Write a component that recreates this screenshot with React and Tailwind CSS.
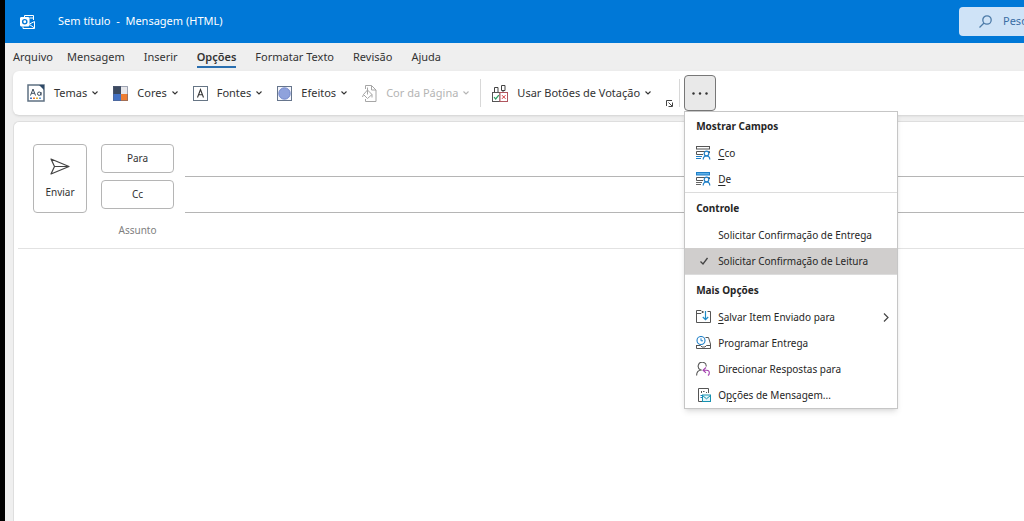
import React, { useState } from 'react';
import clsx from 'clsx';

const TABS = ['Arquivo', 'Mensagem', 'Inserir', 'Opções', 'Formatar Texto', 'Revisão', 'Ajuda'];

const OutlookIcon = () => (
  <svg className="w-4 h-4 shrink-0" viewBox="0 0 16 16" fill="none" stroke="#fff">
    <path d="M4.500 3V1.500h9V6M3 12.500v2h11.500V7.500" />
    <path d="M9.500 4h4M9.500 10l5-2.500M9.500 10.500l5 3.500" />
    <rect x="0.500" y="3.500" width="8.500" height="8.500" rx="0.500" fill="#fff" />
    <circle cx="4.750" cy="7.750" r="2.100" stroke="#0078d7" strokeWidth="1.400" />
  </svg>
);

const ThemesIcon = () => (
  <svg className="w-[18px] h-[18px] shrink-0" viewBox="0 0 18 18" fill="none">
    <rect x="1" y="1" width="16" height="16" fill="#fff" stroke="#5f7183" strokeWidth="1.500" />
    <path d="M12 1h5v5z" fill="#2f4a68" />
    <path d="M3.500 11.500L6 5l2.500 6.500M4.400 9.300h3.200" stroke="#3a4a5c" />
    <path d="M14 8v3.500" stroke="#3a4a5c" />
    <circle cx="12.200" cy="9.700" r="1.700" stroke="#3a4a5c" />
    <path d="M3 14.300h2" stroke="#4472c4" strokeWidth="1.500" />
    <path d="M6 14.300h2" stroke="#ed7d31" strokeWidth="1.500" />
    <path d="M9 14.300h2" stroke="#e0b030" strokeWidth="1.500" />
    <path d="M12 14.300h2" stroke="#5f9bd5" strokeWidth="1.500" />
  </svg>
);

const ColorsIcon = () => (
  <svg className="w-[15px] h-[15px] shrink-0" viewBox="0 0 15 15">
    <path d="M0 0h8v8H0z" fill="#3c4a60" />
    <path d="M8 0h7v8H8z" fill="#e6e6ea" />
    <path d="M0 8h8v7H0z" fill="#4472c4" />
    <path d="M8 8h7v7H8z" fill="#ed7d31" />
    <path d="M0.500 0.500h14v14H0.500z" fill="none" stroke="#55607a" strokeOpacity="0.500" />
  </svg>
);

const FontsIcon = () => (
  <svg className="w-[15px] h-[15px] shrink-0" viewBox="0 0 15 15" fill="none">
    <rect x="0.500" y="0.500" width="14" height="14" stroke="#667585" />
    <path d="M4.500 11.500l3-8 3 8M5.500 8.800h4" stroke="#333" strokeWidth="1.100" />
  </svg>
);

const EffectsIcon = () => (
  <svg className="w-[15px] h-[15px] shrink-0" viewBox="0 0 15 15">
    <rect x="0.500" y="0.500" width="14" height="14" fill="#f4f5fb" stroke="#66758c" />
    <circle cx="7.500" cy="7.500" r="5.700" fill="#8fa2dc" stroke="#7288cc" />
  </svg>
);

const PageColorIcon = () => (
  <svg className="w-[15px] h-[17px] shrink-0" viewBox="0 0 15 17" fill="none" stroke="#a6a6a6">
    <path d="M3.500 4V0.500h6l4.500 4.500v11.500H3.500V14M9.500 0.500V5H14" />
    <path d="M5.500 5L10 9.500 5.500 13.500 1.500 9.500zM5.500 5V2.500M5.500 5v4.500M1.500 9.500L0.500 12" />
    <path d="M10 9.500v3" />
  </svg>
);

const VoteIcon = () => (
  <svg className="w-[16px] h-[17px] shrink-0" viewBox="0 0 16 17" fill="none">
    <path d="M2.500 8.500V2.500h3.500v6M9.500 5.500V0.500h3.500v5H9.500M11 5.500v3" stroke="#444" />
    <rect x="0.500" y="7.500" width="7.500" height="9" stroke="#555" fill="#fff" />
    <rect x="8" y="7.500" width="7.500" height="9" stroke="#b0565e" fill="#fff" />
    <path d="M2 12.200l1.700 1.800L6.800 10.200" stroke="#2f9e63" strokeWidth="1.200" />
    <path d="M10 10.200l3.500 3.600M13.500 10.200L10 13.800" stroke="#d13438" />
  </svg>
);

const SendIcon = () => (
  <svg className="w-5 h-[17px]" viewBox="0 0 20 17" fill="none" stroke="#444" strokeLinejoin="round">
    <path d="M1 1l18 7.500L1 16l3.500-7.500zM4.500 8.500H19" strokeWidth="1.200" />
  </svg>
);

const FieldIcon = ({ from }) => (
  <svg className="w-[15px] h-[14px]" viewBox="0 0 15 14" fill="none">
    <rect x="0.500" y="0.500" width="13" height="2.500" stroke={from ? '#1e7fc7' : '#555'} fill={from ? '#5fb0e8' : '#fff'} />
    <path d="M7 8.500H0.500v-3h13V7" stroke="#555" />
    <path d="M0 10.500h6M0 12.500h5" stroke={from ? '#666' : '#1e7fc7'} />
    <circle cx="10.500" cy="7.500" r="2.300" stroke="#1e7fc7" strokeWidth="1.200" fill="#fff" />
    <path d="M7.200 13.500c0-2.300 1.300-3.500 3.300-3.500s3.300 1.200 3.300 3.500" stroke="#1e7fc7" strokeWidth="1.200" />
  </svg>
);

const SaveIcon = () => (
  <svg className="w-[15px] h-[14px]" viewBox="0 0 15 14" fill="none">
    <path d="M7.500 1.500H6L5 0.500H0.500v12h14v-11h-3M0.500 3.500H5l1-1h1.500" stroke="#555" />
    <path d="M9.500 1v8.500M6.800 7l2.700 2.700L12.200 7" stroke="#1e8bc7" strokeWidth="1.200" />
  </svg>
);

const ScheduleIcon = () => (
  <svg className="w-[15px] h-[14px]" viewBox="0 0 15 14" fill="none">
    <path d="M9.500 1.500h3l2 6.500v4.500h-14V9M0.500 9.500h4l1.500 1.500h3l1.500-1.500h4" stroke="#555" />
    <circle cx="5" cy="4.500" r="4" stroke="#1e7fc7" strokeWidth="1.100" fill="#fff" />
    <path d="M5 2.300v2.500h2" stroke="#1e7fc7" />
  </svg>
);

const DirectIcon = () => (
  <svg className="w-[15px] h-[14px]" viewBox="0 0 15 14" fill="none">
    <path d="M4.500 7.800A4 4 0 1 1 10.200 4.500M0.600 13.500c0-3 1.800-5.500 5.200-5.500" stroke="#555" strokeWidth="1.100" />
    <path d="M10 5.500L7 8.200l3 2.700M7.200 8.200h3.300c2.200 0 3.500 1.500 2.500 4.300l-1 1" stroke="#a33fae" strokeWidth="1.100" />
  </svg>
);

const MessageOptionsIcon = () => (
  <svg className="w-[13px] h-[14px] ml-0.5" viewBox="0 0 13 14" fill="none">
    <path d="M4 13.500H0.500v-13h10V5" stroke="#555" />
    <path d="M3.500 3v2M5 3.500h1.500M8 4.500h1" stroke="#555" />
    <path d="M2.500 7.500h1.500M2.500 9.500h1.500" stroke="#1e7fc7" />
    <rect x="4.500" y="7" width="8" height="6.500" fill="#e6f6fa" stroke="#1691b0" />
    <path d="M4.500 7.500l4 3.300 4-3.300" stroke="#1691b0" />
  </svg>
);

const Chevron = ({ className }) => (
  <svg className={clsx('w-1.5 h-1 shrink-0', className)} viewBox="0 0 6 4" fill="none" stroke="currentColor">
    <path d="M0.500 0.500L3 3 5.500 0.500" strokeWidth="1.100" />
  </svg>
);

const RibbonButton = ({ icon, label, disabled }) => (
  <button type="button" disabled={disabled} className={clsx('flex items-center whitespace-nowrap', disabled ? 'text-[#b4b4b4]' : 'text-[#333]')}>
    {icon}
    <span className="ml-[9px]">{label}</span>
    <Chevron className="ml-[5px]" />
  </button>
);

const MENU = [
  {
    title: 'Mostrar Campos',
    items: [
      { icon: <FieldIcon />, key: 'C', label: 'co' },
      { icon: <FieldIcon from />, key: 'D', label: 'e' },
    ],
  },
  {
    title: 'Controle',
    items: [
      { id: 'entrega', label: 'Solicitar Confirmação de Entrega' },
      { id: 'leitura', label: 'Solicitar Confirmação de Leitura' },
    ],
  },
  {
    title: 'Mais Opções',
    items: [
      { icon: <SaveIcon />, key: 'S', label: 'alvar Item Enviado para', submenu: true },
      { icon: <ScheduleIcon />, label: 'Programar Entrega' },
      { icon: <DirectIcon />, label: 'Direcionar Respostas para' },
      { icon: <MessageOptionsIcon />, pre: 'O', key: 'p', label: 'ções de Mensagem...' },
    ],
  },
];

const OverflowMenu = ({ checked, onCheck }) => (
  <div role="menu" className="absolute left-0 top-full z-10 w-[214px] bg-white border border-[#c6c6c6] shadow-md text-[10px] text-[#262626]">
    {MENU.map((group, i) => (
      <div key={group.title} className={clsx(i > 0 && 'border-t border-[#dcdcdc] pt-px')}>
        <div className="h-7 px-[11px] flex items-center font-bold">{group.title}</div>
        {group.items.map((item) => {
          const isChecked = item.id && item.id === checked;
          return (
            <button key={item.label} type="button" role={item.id ? 'menuitemcheckbox' : 'menuitem'}
              aria-checked={item.id ? isChecked : undefined}
              onClick={() => item.id && onCheck(isChecked ? null : item.id)}
              className={clsx('w-full h-[26px] pl-[11px] pr-2 flex items-center text-left whitespace-nowrap', isChecked ? 'bg-[#d0cecd]' : 'hover:bg-gray-100')}>
              <span className="w-[22px] flex items-center shrink-0">
                {item.icon}
                {isChecked && (
                  <svg className="w-2 h-2 ml-1" viewBox="0 0 8 8" fill="none" stroke="#444" strokeWidth="1.300">
                    <path d="M0.500 4.500L3 7 7.500 1" />
                  </svg>
                )}
              </span>
              <span className="flex-1">
                {item.pre}
                {item.key && <span className="underline underline-offset-2">{item.key}</span>}
                {item.label}
              </span>
              {item.submenu && (
                <svg className="w-1.5 h-[9px]" viewBox="0 0 6 9" fill="none" stroke="#444">
                  <path d="M1 0.500l4 4-4 4" strokeWidth="1.200" />
                </svg>
              )}
            </button>
          );
        })}
      </div>
    ))}
  </div>
);

export default function App() {
  const [tab, setTab] = useState('Opções');
  const [menuOpen, setMenuOpen] = useState(true);
  const [checked, setChecked] = useState('leitura');

  return (
    <div className="min-h-screen flex flex-col overflow-hidden bg-[#efefef] border-l-5 border-black text-[11px] text-[#333] font-['Noto_Sans','Open_Sans',sans-serif]">
      <header className="h-[43px] pl-[15px] flex items-center bg-[#0078d7] text-white">
        <OutlookIcon />
        <h1 className="ml-[22px] flex-1 text-[11px] whitespace-pre">Sem título  -  Mensagem (HTML)</h1>
        <label className="w-[65px] h-[29px] pl-5 flex items-center bg-[#cfe3f7] rounded-l-sm">
          <svg className="w-[13px] h-[13px] shrink-0" viewBox="0 0 13 13" fill="none" stroke="#4d7ba8" strokeWidth="1.300">
            <circle cx="8" cy="5" r="4.200" />
            <path d="M5 8L0.500 12.500" />
          </svg>
          <input type="text" aria-label="Pesquisar" placeholder="Pesquisar"
            className="ml-[11px] min-w-0 flex-1 bg-transparent placeholder:text-[#3a6ea5] focus:outline-none" />
        </label>
      </header>

      <nav className="h-7 pl-2 flex items-center gap-[19px]">
        {TABS.map((t) => (
          <button key={t} type="button" onClick={() => setTab(t)}
            className={clsx('h-5 mt-0.5 flex items-center whitespace-nowrap border-b-2 first:-mr-[5px]', t === tab ? 'border-[#2a6fb0] font-semibold' : 'border-transparent')}>
            {t}
          </button>
        ))}
      </nav>

      <div className="ml-2 h-11 pl-3.5 flex items-center bg-white rounded-l-md shadow">
        <div className="flex items-center gap-[15px]">
          <RibbonButton icon={<ThemesIcon />} label="Temas" />
          <RibbonButton icon={<ColorsIcon />} label="Cores" />
          <RibbonButton icon={<FontsIcon />} label="Fontes" />
          <RibbonButton icon={<EffectsIcon />} label="Efeitos" />
          <RibbonButton icon={<PageColorIcon />} label="Cor da Página" disabled />
        </div>
        <div className="mx-[11px] w-px h-7 bg-[#d8d8d8]" />
        <RibbonButton icon={<VoteIcon />} label="Usar Botões de Votação" />
        <button type="button" aria-label="Mais controles" className="ml-[15px] mb-2 self-end">
          <svg className="w-[7px] h-[7px]" viewBox="0 0 7 7" fill="none" stroke="#444">
            <path d="M0.500 6V0.500H6M2.500 2.500L6 6M6.500 2.500v4h-4" />
          </svg>
        </button>
        <div className="ml-1.5 mr-1 w-px h-7 bg-[#d8d8d8]" />
        <div className="relative">
          <button type="button" aria-label="Mais opções" aria-expanded={menuOpen} onClick={() => setMenuOpen(!menuOpen)}
            className="w-8 h-9 flex items-center justify-center bg-[#e9e9e9] border border-[#777] rounded">
            <svg className="w-4 h-[3px]" viewBox="0 0 16 3" fill="#333">
              <circle cx="1.500" cy="1.500" r="1.200" />
              <circle cx="8" cy="1.500" r="1.200" />
              <circle cx="14.500" cy="1.500" r="1.200" />
            </svg>
          </button>
          {menuOpen && <OverflowMenu checked={checked} onCheck={setChecked} />}
        </div>
      </div>

      <main className="ml-2 mt-1.5 flex-1 flex flex-col bg-white border-t border-l border-[#dedede] rounded-tl-md text-[10px]">
        <div className="pt-[22px] pl-[19px] flex">
          <button type="button" className="w-[54px] h-[69px] flex flex-col items-center justify-center gap-2.5 border border-[#b5b5b5] rounded">
            <SendIcon />
            Enviar
          </button>
          <div className="ml-3.5 flex-1 flex flex-col">
            {['Para', 'Cc'].map((field) => (
              <div key={field} className="h-9 flex items-start">
                <button type="button" className="w-[73px] h-[29px] shrink-0 border border-[#b5b5b5] rounded">{field}</button>
                <input type="text" aria-label={field} className="ml-[11px] h-[33px] min-w-0 flex-1 border-b border-[#b5b5b5] focus:outline-none" />
              </div>
            ))}
          </div>
        </div>
        <div className="ml-1 pl-[83px] pb-[3px] h-[33px] flex items-center border-b border-[#e2e2e2]">
          <label htmlFor="assunto" className="w-[73px] text-center text-[#808080]">Assunto</label>
          <input id="assunto" type="text" className="ml-[11px] min-w-0 flex-1 focus:outline-none" />
        </div>
        <textarea aria-label="Mensagem" className="flex-1 p-4 resize-none focus:outline-none" />
      </main>
    </div>
  );
}
